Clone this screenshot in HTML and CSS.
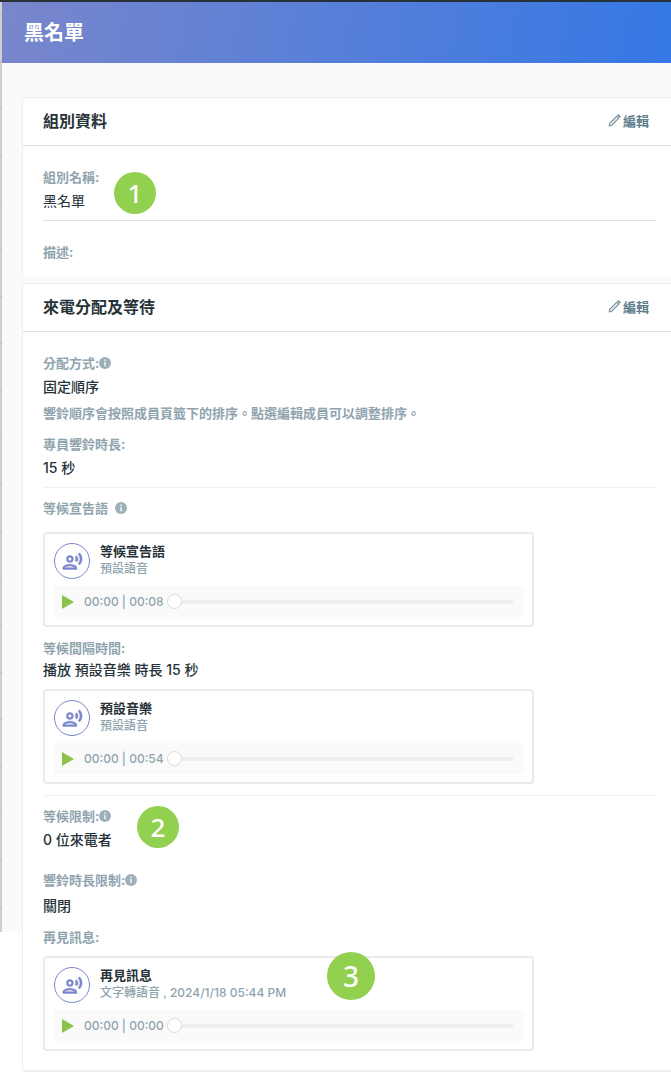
FILE: index.html
```html
<!DOCTYPE html>
<html lang="zh-Hant">
<head>
    <meta charset="UTF-8">
    <meta name="viewport" content="width=device-width, initial-scale=1.0">
    <title>黑名單</title>
    <link rel="stylesheet" href="styles.css">
</head>
<body>
    <!-- 共用圖示 -->
    <svg class="sprite" aria-hidden="true">
        <symbol id="icon-edit" viewBox="0 0 14 14">
            <path d="M1.2 12.8l.7-3 7.6-7.6 2.3 2.3-7.6 7.6z" fill="#dfe6e9" stroke="#78909c" stroke-width="1.1" stroke-linejoin="round"/>
            <path d="M10.4 1.3l.8-.8 2.3 2.3-.8.8z" fill="#607d8b" stroke="#607d8b" stroke-width=".6"/>
        </symbol>
        <symbol id="icon-info" viewBox="0 0 12 12">
            <circle cx="6" cy="6" r="6" fill="#9db0b9"/>
            <path d="M5.2 2.6h1.6v1.5H5.2zM5.2 5h1.6v4.3H5.2z" fill="#e8f3ea"/>
        </symbol>
        <symbol id="icon-voice" viewBox="0 0 24 24">
            <path d="M9 13a4 4 0 1 0 0-8 4 4 0 0 0 0 8zm0-6a2 2 0 1 1 0 4 2 2 0 0 1 0-4zm0 8c-2.670 0-8 1.340-8 4v2h16v-2c0-2.660-5.330-4-8-4zm-6 4c.22-.72 3.310-2 6-2 2.700 0 5.800 1.290 6 2H3zM15.080 7.050c.84 1.180.84 2.710 0 3.890l1.680 1.690c2.020-2.020 2.020-5.070 0-7.270l-1.680 1.690zM20.070 2l-1.630 1.630c2.770 3.020 2.770 7.560 0 10.740L20.070 16c3.900-3.890 3.910-9.950 0-14z"/>
        </symbol>
        <symbol id="icon-play" viewBox="0 0 12 14">
            <path d="M0 0l12 7-12 7z"/>
        </symbol>
    </svg>

    <div class="page">
        <header class="page-header">
            <h1>黑名單</h1>
        </header>

        <main class="content">
            <section class="card">
                <div class="card-header">
                    <h2>組別資料</h2>
                    <button type="button" class="edit"><svg><use href="#icon-edit"/></svg>編輯</button>
                </div>
                <div class="group">
                    <div class="field">
                        <div class="label">組別名稱:</div>
                        <div class="value light">黑名單</div>
                        <span class="badge badge-1">1</span>
                    </div>
                </div>
                <div class="group description">
                    <div class="label">描述:</div>
                </div>
            </section>

            <section class="card routing">
                <div class="card-header">
                    <h2>來電分配及等待</h2>
                    <button type="button" class="edit"><svg><use href="#icon-edit"/></svg>編輯</button>
                </div>

                <div class="group faint">
                    <div class="field">
                        <div class="label">分配方式:<svg class="info"><use href="#icon-info"/></svg></div>
                        <div class="value">固定順序</div>
                        <div class="hint">響鈴順序會按照成員頁籤下的排序。點選編輯成員可以調整排序。</div>
                    </div>
                    <div class="field">
                        <div class="label">專員響鈴時長:</div>
                        <div class="value">15 秒</div>
                    </div>
                </div>

                <div class="group faint audio">
                    <div class="field">
                        <div class="label spaced">等候宣告語<svg class="info"><use href="#icon-info"/></svg></div>
                        <div class="clip clip-first">
                            <div class="clip-head">
                                <span class="avatar"><svg><use href="#icon-voice"/></svg></span>
                                <div>
                                    <div class="clip-name">等候宣告語</div>
                                    <div class="clip-sub">預設語音</div>
                                </div>
                            </div>
                            <div class="player">
                                <button type="button" class="play" aria-label="播放"><svg><use href="#icon-play"/></svg></button>
                                <span class="time">00:00 | 00:08</span>
                                <input type="range" min="0" max="8" value="0" aria-label="等候宣告語進度">
                            </div>
                        </div>
                    </div>
                    <div class="field">
                        <div class="label">等候間隔時間:</div>
                        <div class="value tight">播放 預設音樂 時長 15 秒</div>
                        <div class="clip">
                            <div class="clip-head">
                                <span class="avatar"><svg><use href="#icon-voice"/></svg></span>
                                <div>
                                    <div class="clip-name">預設音樂</div>
                                    <div class="clip-sub">預設語音</div>
                                </div>
                            </div>
                            <div class="player">
                                <button type="button" class="play" aria-label="播放"><svg><use href="#icon-play"/></svg></button>
                                <span class="time">00:00 | 00:54</span>
                                <input type="range" min="0" max="54" value="0" aria-label="預設音樂進度">
                            </div>
                        </div>
                    </div>
                </div>

                <div class="group last">
                    <div class="field">
                        <div class="label">等候限制:<svg class="info"><use href="#icon-info"/></svg></div>
                        <div class="value">0 位來電者</div>
                        <span class="badge badge-2">2</span>
                    </div>
                    <div class="field limit">
                        <div class="label">響鈴時長限制:<svg class="info"><use href="#icon-info"/></svg></div>
                        <div class="value loose">關閉</div>
                    </div>
                    <div class="field">
                        <div class="label">再見訊息:</div>
                        <div class="clip">
                            <div class="clip-head">
                                <span class="avatar"><svg><use href="#icon-voice"/></svg></span>
                                <div>
                                    <div class="clip-name">再見訊息</div>
                                    <div class="clip-sub">文字轉語音 , 2024/1/18 05:44 PM</div>
                                </div>
                            </div>
                            <div class="player">
                                <button type="button" class="play" aria-label="播放"><svg><use href="#icon-play"/></svg></button>
                                <span class="time">00:00 | 00:00</span>
                                <input type="range" min="0" max="1" value="0" aria-label="再見訊息進度">
                            </div>
                            <span class="badge badge-3">3</span>
                        </div>
                    </div>
                </div>
            </section>
        </main>
    </div>
</body>
</html>
```
FILE: styles.css
```css
* {
    box-sizing: border-box;
}
body {
    margin: 0;
    font-family: Inter, "Noto Sans CJK TC", sans-serif;
    font-size: 13px;
    line-height: 20px;
    color: #263238;
    background: #fff;
}
h1, h2 {
    margin: 0;
    font-weight: 700;
}
button {
    border: 0;
    padding: 0;
    background: none;
    font-family: inherit;
    cursor: pointer;
}
.sprite {
    display: none;
}
.page {
    position: relative;
    padding-left: 2px;
    border-top: 2px solid #263238;
}
/* 左側底層清單露出的邊緣 */
.page::before,
.page::after {
    content: "";
    position: absolute;
    top: 0;
    left: 0;
    height: 930px;
    z-index: -1;
}
.page::before {
    width: 100%;
    background: #fafafa;
}
.page::after {
    width: 2px;
    background: repeating-linear-gradient(#cfcfcf 0 12px, #bbb 12px 13px, #cfcfcf 13px 47px);
}
.page-header {
    padding: 16px 22px 15px;
    background: linear-gradient(100deg, #7986cb, #3578e5);
}
.page-header h1 {
    font-size: 20px;
    line-height: 30px;
    color: #fff;
}
.content {
    padding: 34px 0 3px 20px;
}
.card {
    background: #fff;
    border: solid #eee;
    border-width: 1px 0 0 1px;
    border-radius: 4px 0 0 0;
}
.card + .card {
    margin-top: 7px;
}
.routing {
    border-bottom-width: 2px;
    border-radius: 4px 0 0 4px;
}
.card-header {
    display: flex;
    align-items: center;
    justify-content: space-between;
    height: 48px;
    padding: 0 22px 2px 20px;
    border-bottom: 1px solid #e0e0e0;
}
.card-header h2 {
    font-size: 16px;
}
.edit {
    display: flex;
    align-items: center;
    gap: 2px;
    font-size: 13px;
    font-weight: 700;
    color: #607d8b;
}
.edit svg {
    width: 13px;
    height: 13px;
}
.group {
    margin: 0 15px 0 20px;
    padding: 21px 0 9px;
    border-bottom: 1px solid #e0e0e0;
}
.group.faint {
    border-color: #f2f2f2;
}
.group.audio {
    padding: 10px 0 11px;
}
.group.description,
.group.last {
    border-bottom: 0;
}
.group.description {
    padding-bottom: 14px;
}
.group.last {
    padding: 10px 0 19px;
}
.field {
    position: relative;
}
.field + .field {
    margin-top: 11px;
}
.field + .limit {
    margin-top: 20px;
}
.label,
.hint {
    font-weight: 700;
    color: #90a4ae;
}
.label {
    display: flex;
    align-items: center;
}
.label.spaced {
    gap: 7px;
}
.info {
    width: 12px;
    height: 12px;
}
.value {
    margin-top: 4px;
    font-size: 14px;
    font-weight: 500;
}
.value.light {
    font-weight: 400;
}
.value.tight {
    margin-top: 2px;
}
.value.loose {
    margin-top: 6px;
}
.hint {
    margin-top: 6px;
}
.clip {
    position: relative;
    max-width: 491px;
    margin-top: 9px;
    padding: 9px 8px 8px 9px;
    border: 2px solid #eaeaea;
    border-radius: 4px;
}
.clip-first {
    margin-top: 14px;
}
.clip-head {
    display: flex;
    gap: 10px;
    line-height: 17px;
}
.avatar {
    display: flex;
    align-items: center;
    justify-content: center;
    width: 36px;
    height: 36px;
    border: 1px solid #7986cb;
    border-radius: 50%;
}
.avatar svg {
    width: 21px;
    height: 21px;
    fill: #7986cb;
    stroke: #7986cb;
    stroke-width: 0.5;
}
.clip-name {
    font-weight: 700;
}
.clip-sub {
    font-size: 12px;
    font-weight: 500;
    color: #90a4ae;
}
.player {
    display: flex;
    align-items: center;
    height: 31px;
    margin-top: 7px;
    padding: 0 11px 0 8px;
    background: #fafafa;
}
.play {
    display: flex;
    width: 22px;
}
.play svg {
    width: 12px;
    height: 14px;
    fill: #8bc34a;
}
.time {
    font-size: 12px;
    font-weight: 500;
    color: #90a4ae;
}
.player input {
    flex: 1;
    min-width: 0;
    height: 16px;
    margin: 0 0 0 3px;
    appearance: none;
    background: linear-gradient(#eceef0, #eceef0) center / 100% 4px no-repeat;
}
.player input::-webkit-slider-thumb {
    appearance: none;
    width: 15px;
    height: 15px;
    border: 1px solid #d9d9d9;
    border-radius: 50%;
    background: #fff;
}
/* 步驟編號 */
.badge {
    position: absolute;
    width: 42px;
    height: 42px;
    border-radius: 50%;
    background: #92d050;
    font-family: "Noto Sans", sans-serif;
    font-size: 26px;
    font-weight: 500;
    line-height: 42px;
    text-align: center;
    color: #fff;
}
.badge-1 {
    top: 5px;
    left: 71px;
}
.badge-2 {
    top: 0;
    left: 94px;
}
.badge-3 {
    top: -6px;
    left: 282px;
    width: 48px;
    height: 48px;
    font-size: 28px;
    line-height: 48px;
}
```
